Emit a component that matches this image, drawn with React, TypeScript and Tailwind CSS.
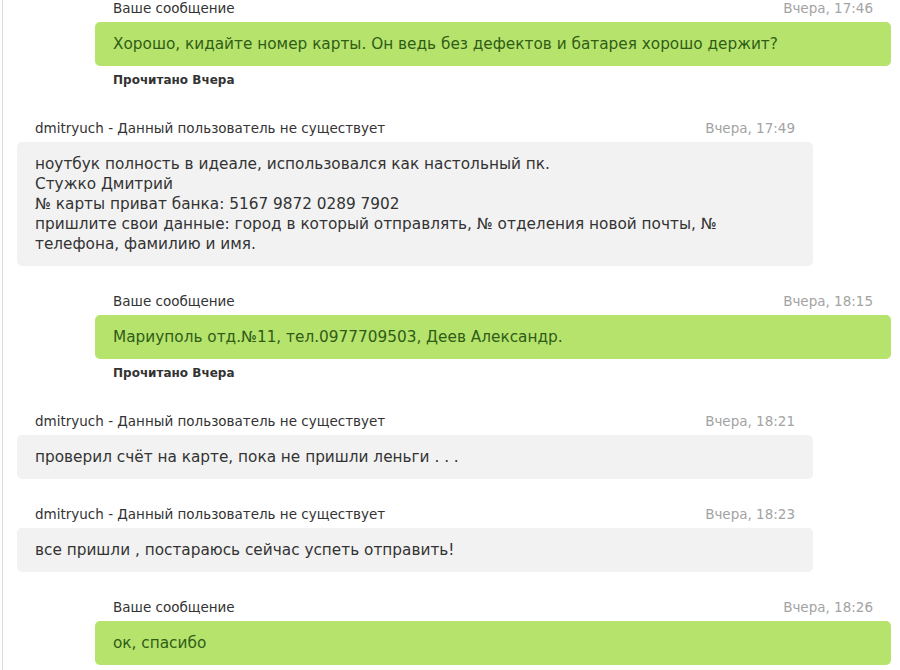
import React from "react";

type Msg = {
  id: number;
  mine: boolean;
  time: string;
  lines: string[];
};

const messages: Msg[] = [
  {
    id: 1,
    mine: true,
    time: "Вчера, 17:46",
    lines: ["Хорошо, кидайте номер карты. Он ведь без дефектов и батарея хорошо держит?"],
  },
  {
    id: 2,
    mine: false,
    time: "Вчера, 17:49",
    lines: [
      "ноутбук полность в идеале, использовался как настольный пк.",
      "Стужко Дмитрий",
      "№ карты приват банка: 5167 9872 0289 7902",
      "пришлите свои данные: город в который отправлять, № отделения новой почты, №",
      "телефона, фамилию и имя.",
    ],
  },
  {
    id: 3,
    mine: true,
    time: "Вчера, 18:15",
    lines: ["Мариуполь отд.№11, тел.0977709503, Деев Александр."],
  },
  {
    id: 4,
    mine: false,
    time: "Вчера, 18:21",
    lines: ["проверил счёт на карте, пока не пришли леньги . . ."],
  },
  {
    id: 5,
    mine: false,
    time: "Вчера, 18:23",
    lines: ["все пришли , постараюсь сейчас успеть отправить!"],
  },
  {
    id: 6,
    mine: true,
    time: "Вчера, 18:26",
    lines: ["ок, спасибо"],
  },
];

const App = () => {
  return (
    <div className="w-[900px] h-[670px] overflow-hidden bg-white font-['DejaVu_Sans','Verdana',sans-serif]">
      <div className="ml-[2px] h-full border-l border-[#dcdcdc]">
        {messages.map((m, i) => (
          <div
            key={m.id}
            className={`${m.mine ? "ml-[92px]" : "ml-[14px]"} w-[796px] ${i === 0 ? "" : "mt-[27px]"}`}
          >
            <div className="flex justify-between px-[18px] text-[13.5px] leading-[16px] mb-[6px]">
              <span className="text-[#333]">
                {m.mine ? "Ваше сообщение" : "dmitryuch - Данный пользователь не существует"}
              </span>
              <span className="text-[#a3a3a3]">{m.time}</span>
            </div>
            <div
              className={`rounded-[5px] px-[18px] py-[12px] text-[15.3px] leading-[20px] ${
                m.mine ? "bg-[#b6e36c] text-[#2f5d17]" : "bg-[#f2f2f2] text-[#333]"
              }`}
            >
              {m.lines.map((l, k) => (
                <p key={k}>{l}</p>
              ))}
            </div>
            {m.mine && i < messages.length - 1 && (
              <p className="px-[18px] pt-[6px] pb-[5px] text-[12px] leading-[16px] font-bold text-[#333]">
                Прочитано Вчера
              </p>
            )}
          </div>
        ))}
      </div>
    </div>
  );
};

export default App;
